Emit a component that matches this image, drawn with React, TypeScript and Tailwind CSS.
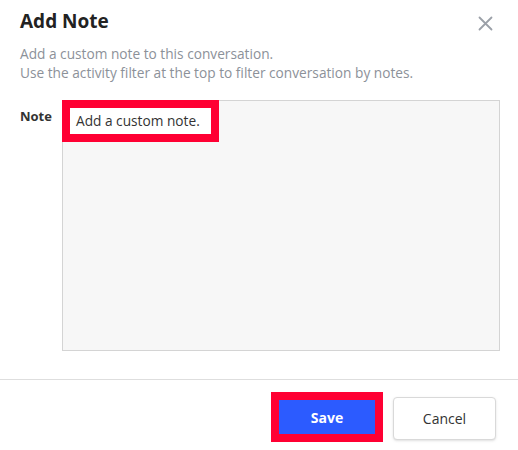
export default function App() {
  return (
    <div className="w-[518px] h-[450px] bg-white overflow-hidden font-['Open_Sans',sans-serif] text-[#333]">
      {/* Header */}
      <div className="flex items-start justify-between pl-5 pr-[25px] pt-[7px]">
        <h1 className="text-[19px] leading-[28px] font-bold text-[#222]">Add Note</h1>
        <button className="mt-[9px] text-[#9ba0a8]">
          <svg width="15" height="15" viewBox="0 0 15 15" fill="none" stroke="currentColor" strokeWidth="1.8" strokeLinecap="round">
            <path d="M1.5 1.5l12 12M13.5 1.5l-12 12" />
          </svg>
        </button>
      </div>
      <p className="px-5 mt-[9px] text-[13.7px] leading-[19px] text-[#8c9199]">
        Add a custom note to this conversation.
        <br />
        Use the activity filter at the top to filter conversation by notes.
      </p>

      {/* Form */}
      <div className="flex pl-5 pr-[18px] mt-[18px]">
        <label className="w-[42px] shrink-0 pt-[7px] text-[13px] leading-[18px] font-bold text-[#333]">Note</label>
        <div className="flex-1 h-[251px] border border-[#d4d4d4] bg-[#f7f7f7]">
          <div className="-mt-px -ml-px w-[157px] h-[42px] border-[8px] border-[#ff0033] bg-white flex items-center pl-[6px]">
            <span className="text-[13.7px] text-[#333]">Add a custom note.</span>
          </div>
        </div>
      </div>

      {/* Footer */}
      <div className="mt-[28px] border-t border-[#dedede] flex justify-end items-center gap-[10px] pr-[22px] pt-[12px]">
        <div className="w-[112px] h-[50px] border-[8px] border-[#ff0033]">
          <button className="w-full h-full bg-[#2c5bff] text-white text-[14px] font-bold">Save</button>
        </div>
        <button className="w-[103px] h-[43px] mt-[3px] rounded-[4px] border border-[#d9d9d9] bg-white shadow-sm text-[14px] font-medium text-[#333]">
          Cancel
        </button>
      </div>
    </div>
  );
}
